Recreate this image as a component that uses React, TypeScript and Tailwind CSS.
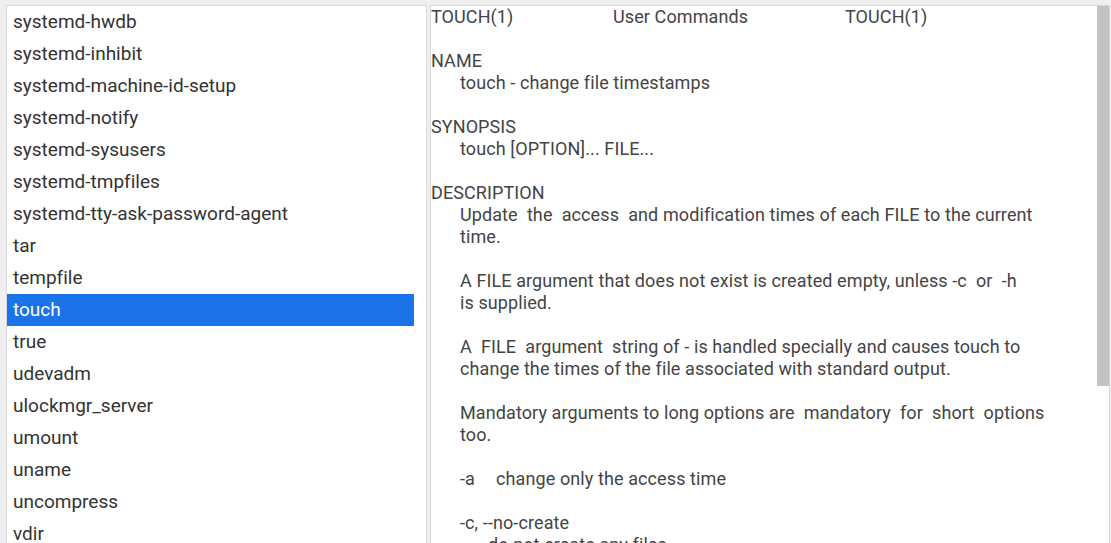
import React from "react";

const items = [
  "systemd-hwdb",
  "systemd-inhibit",
  "systemd-machine-id-setup",
  "systemd-notify",
  "systemd-sysusers",
  "systemd-tmpfiles",
  "systemd-tty-ask-password-agent",
  "tar",
  "tempfile",
  "touch",
  "true",
  "udevadm",
  "ulockmgr_server",
  "umount",
  "uname",
  "uncompress",
  "vdir",
];

type Line = { t: string; i?: boolean };

const lines: Line[] = [
  { t: "" },
  { t: "NAME" },
  { t: "touch - change file timestamps", i: true },
  { t: "" },
  { t: "SYNOPSIS" },
  { t: "touch [OPTION]... FILE...", i: true },
  { t: "" },
  { t: "DESCRIPTION" },
  { t: "Update  the  access  and modification times of each FILE to the current", i: true },
  { t: "time.", i: true },
  { t: "" },
  { t: "A FILE argument that does not exist is created empty, unless -c  or  -h", i: true },
  { t: "is supplied.", i: true },
  { t: "" },
  { t: "A  FILE  argument  string of - is handled specially and causes touch to", i: true },
  { t: "change the times of the file associated with standard output.", i: true },
  { t: "" },
  { t: "Mandatory arguments to long options are  mandatory  for  short  options", i: true },
  { t: "too.", i: true },
  { t: "" },
];

export default function App() {
  return (
    <div
      className="h-[543px] w-[1111px] overflow-hidden bg-[#efefef] flex items-start pt-[5px] pl-[6px] gap-[3px] [font-variant-ligatures:none]"
      style={{ fontFamily: "Roboto, 'Noto Sans', sans-serif" }}
    >
      <div className="w-[421px] h-[600px] shrink-0 bg-white border border-[#d9d9d9] flex">
        <div className="flex-1 flex flex-col">
          {items.map((it) => (
            <div
              key={it}
              className={
                "h-[32px] shrink-0 flex items-center pl-[6px] text-[19px] " +
                (it === "touch" ? "bg-[#1a73e8] text-white" : "text-[#333333]")
              }
            >
              {it}
            </div>
          ))}
        </div>
        <div className="w-[12px] shrink-0" />
      </div>
      <div className="w-[680px] h-[600px] shrink-0 bg-white border border-[#d9d9d9] flex">
        <div className="flex-1 flex flex-col -mt-[1px] text-[18px] text-[#444444] tracking-[0.1px] whitespace-pre">
          <div className="h-[22px] flex items-center">
            <span className="w-[182px]">TOUCH(1)</span>
            <span className="w-[232px]">User Commands</span>
            <span>TOUCH(1)</span>
          </div>
          {lines.map((l, k) => (
            <div key={k} className={"h-[22px] flex items-center " + (l.i ? "pl-[29px]" : "")}>
              {l.t}
            </div>
          ))}
          <div className="h-[22px] flex items-center pl-[29px]">
            <span className="w-[36px]">-a</span>
            <span>change only the access time</span>
          </div>
          <div className="h-[22px]" />
          <div className="h-[22px] flex items-center pl-[29px]">-c, --no-create</div>
          <div className="h-[22px] flex items-center pl-[57px]">do not create any files</div>
        </div>
        <div className="w-[12px] shrink-0 flex flex-col">
          <div className="h-[380px] bg-[#bfc3c3]" />
        </div>
      </div>
    </div>
  );
}
